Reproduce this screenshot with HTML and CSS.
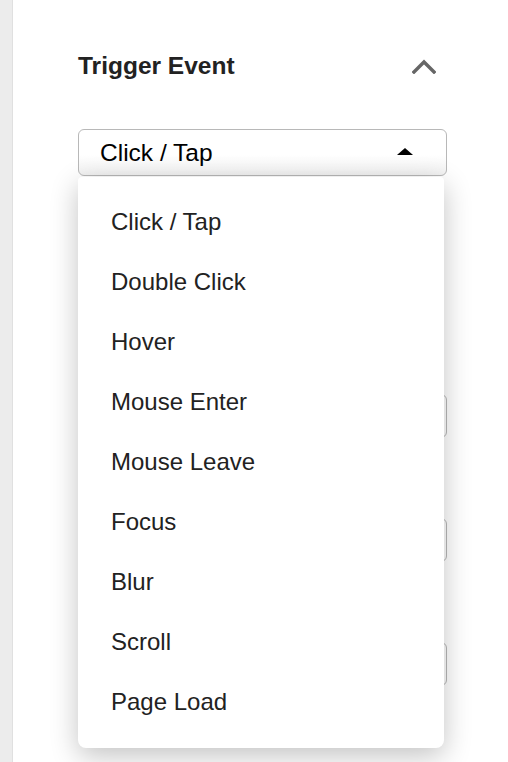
FILE: index.html
```html
<!DOCTYPE html>
<html lang="en">
<head>
<meta charset="utf-8">
<title>Trigger Event</title>
<link rel="stylesheet" href="styles.css">
</head>
<body>
<div class="layout">
  <aside class="rail"></aside>
  <main class="panel">
    <div class="section-head">
      <h2 class="section-title">Trigger Event</h2>
      <button class="collapse" aria-label="Collapse">
        <svg width="24" height="16" viewBox="0 0 24 16"><path d="M2 14 L12 4 L22 14" fill="none" stroke="#666" stroke-width="3.4" stroke-linecap="square"/></svg>
      </button>
    </div>
    <div class="select-wrap">
      <div class="select">
        <span class="select-value">Click / Tap</span>
        <svg class="select-caret" width="16" height="7" viewBox="0 0 16 7"><path d="M0 7 L8 0 L16 7 Z" fill="#000"/></svg>
      </div>
      <ul class="menu">
        <li class="menu-item">Click / Tap</li>
        <li class="menu-item">Double Click</li>
        <li class="menu-item">Hover</li>
        <li class="menu-item">Mouse Enter</li>
        <li class="menu-item">Mouse Leave</li>
        <li class="menu-item">Focus</li>
        <li class="menu-item">Blur</li>
        <li class="menu-item">Scroll</li>
        <li class="menu-item">Page Load</li>
      </ul>
    </div>
    <div class="fields">
      <div class="field-input"></div>
      <div class="field-input"></div>
      <div class="field-input"></div>
    </div>
  </main>
</div>
</body>
</html>
```

FILE: styles.css
```css
* { box-sizing: border-box; }
html, body { margin: 0; padding: 0; background: #fff; }
body {
  font-family: "Liberation Sans", Arial, Helvetica, sans-serif;
  color: #222;
  overflow: hidden;
}
.layout {
  display: flex;
  height: 762px;
}
.rail {
  width: 13px;
  flex: none;
  background: #ececec;
  border-right: 1px solid #e0e0e0;
}
.panel {
  flex: 1;
  padding: 51px 61px 0 65px;
}
.section-head {
  display: flex;
  align-items: center;
  justify-content: space-between;
  height: 30px;
}
.section-title {
  margin: 0;
  font-size: 24.5px;
  font-weight: 700;
  color: #222;
  line-height: 30px;
}
.collapse {
  border: 0;
  background: none;
  padding: 0;
  margin: 0 11px 0 0;
  display: flex;
  width: 24px;
  height: 16px;
}
.select-wrap {
  position: relative;
  margin-top: 48px;
}
.select {
  height: 47px;
  border: 1px solid #b8b8b8;
  border-radius: 6px;
  background: linear-gradient(#fff 55%, #f2f2f2);
  display: flex;
  align-items: center;
  justify-content: space-between;
  padding: 0 33px 0 21px;
}
.select-value {
  font-size: 24.5px;
  color: #000;
}
.select-caret { display: block; margin-top: -3px; }
.menu {
  position: absolute;
  top: 48px;
  left: 0;
  width: 366px;
  margin: 0;
  padding: 15px 0 16px;
  list-style: none;
  background: #fff;
  border-radius: 4px 4px 8px 8px;
  box-shadow: 0 8px 28px rgba(0, 0, 0, 0.24);
  z-index: 2;
}
.menu-item {
  height: 60px;
  line-height: 60px;
  padding-left: 33px;
  font-size: 24px;
  color: #222;
}
.fields {
  display: flex;
  flex-direction: column;
  gap: 80px;
  padding-top: 218px;
}
.field-input {
  height: 44px;
  border: 1px solid #b8b8b8;
  border-radius: 6px;
  background: #fff;
}
```
